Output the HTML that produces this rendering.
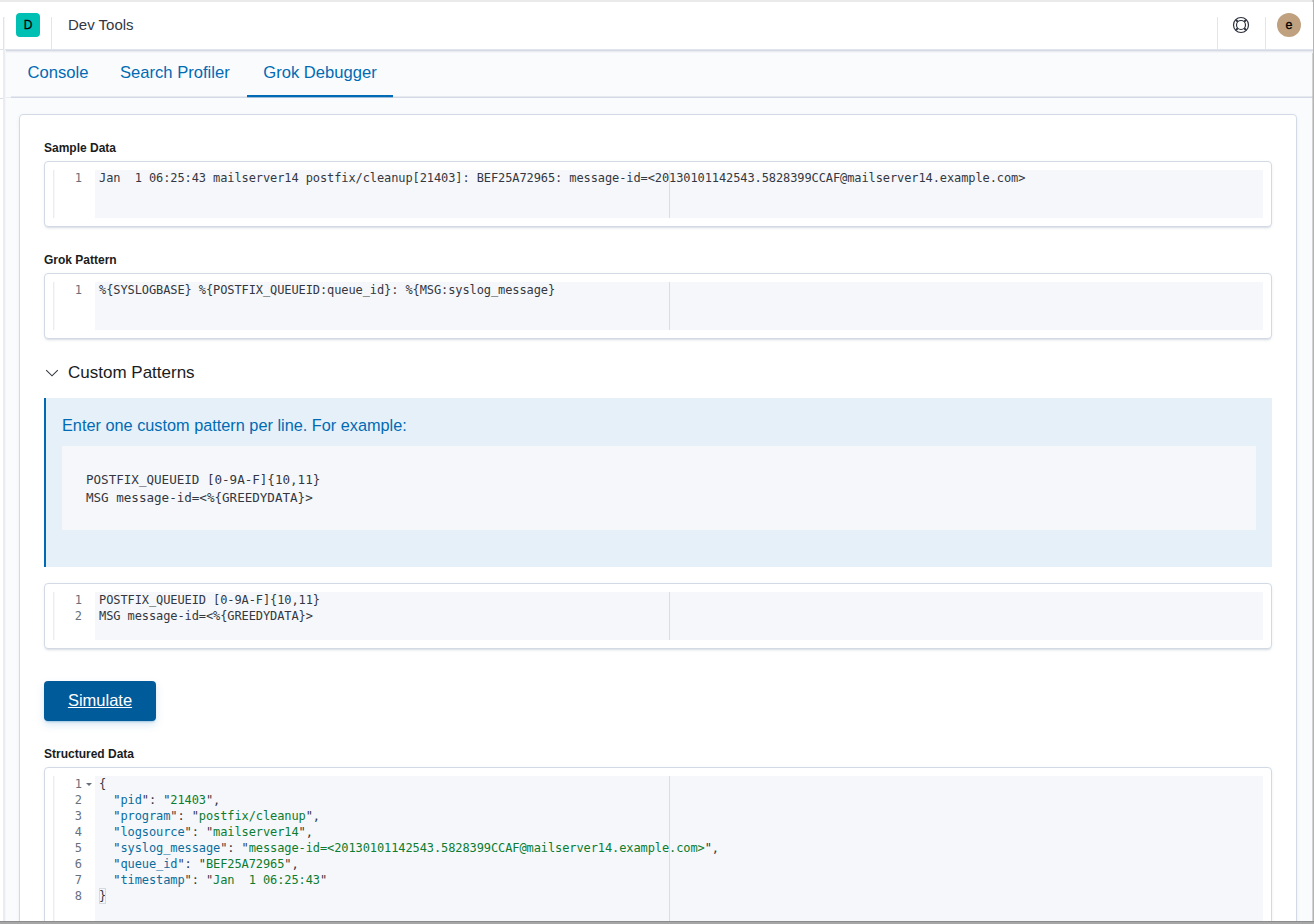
<!DOCTYPE html>
<html lang="en">
<head>
<meta charset="utf-8">
<title>Dev Tools - Grok Debugger</title>
<style>
*{box-sizing:border-box;margin:0;padding:0}
html,body{width:1314px;height:924px;overflow:hidden;background:#fff}
body{position:relative;font-family:"Liberation Sans",sans-serif;color:#343741;-webkit-font-smoothing:antialiased}
.abs{position:absolute}
#topstrip{left:0;top:0;width:1314px;height:2px;background:#eaeaea}
#rightedge{left:1312px;top:0;width:2px;height:924px;background:linear-gradient(90deg,rgba(190,190,190,.35),#b4b4b4 60%)}
#bottombar{left:0;top:921px;width:1314px;height:3px;background:#a6a6a6;border-top:1px solid #8c8c8c}
#leftline{left:3px;top:17px;width:2px;height:33px;background:linear-gradient(90deg,#dfe3ec 0,#dfe3ec 1px,#f3f5f9 1px);z-index:3}
#leftshade{left:3px;top:50px;width:3px;height:871px;background:linear-gradient(90deg,#eaecf1 0,#eaecf1 2px,#f5f6f9 2px);z-index:3}
#lefthr1{left:0;top:49px;width:4px;height:1px;background:#dfe3ec;z-index:3}
#lefthr2{left:0;top:98px;width:4px;height:1px;background:#d9dde6}
#lefthr3{left:4px;top:97px;width:7px;height:1px;background:#e9ecf2}

/* header */
#header{left:4px;top:2px;width:1309px;height:48px;background:#fff;border-bottom:1px solid #dfe3ec;z-index:2}
#hshadow{left:4px;top:50px;width:1309px;height:3px;z-index:2;background:linear-gradient(180deg,#d5dae5 0,#d5dae5 1px,#e9ebf1 1px,#e9ebf1 2px,#f4f5f9 2px,#f4f5f9 3px)}
#appbadge{left:12px;top:11px;width:24px;height:24px;border-radius:4px;background:#00bfb3;color:#000;font-size:12px;font-weight:400;-webkit-text-stroke:.3px #000;text-align:center;line-height:24px}
.hsep{top:15px;width:1px;height:33px;background:#e1e5ee}
#crumb{left:64px;top:13px;font-size:15px;line-height:20px;color:#343741;white-space:nowrap}
#help{left:1229px;top:15px;width:16px;height:16px;overflow:visible}
#avatar{left:1273px;top:11px;width:24px;height:24px;border-radius:50%;background:#bfa180;color:#000;font-size:12.4px;text-align:center;line-height:24px;-webkit-text-stroke:.35px #000}

/* main */
#main{left:4px;top:50px;width:1309px;height:871px;background:#fafbfd}
#tabs{left:7px;top:0;width:1302px;height:48px;border-bottom:1px solid #d4dae5}
#tabs:before{content:"";position:absolute;left:0;right:0;bottom:0;height:1px;background:#e6e9f0}
.tab{position:absolute;top:0;height:48px;line-height:46px;font-size:16.6px;color:#006bb4;white-space:nowrap}
.tab.sel:after{content:"";position:absolute;left:0;right:0;top:45px;height:2px;background:#006bb4;box-shadow:0 1px 0 rgba(0,107,180,.25)}

#panel{left:15px;top:64px;width:1278px;height:900px;background:#fff;border:1px solid #d3dae6;border-radius:4px;box-shadow:0 2px 2px -1px rgba(152,162,179,.3),0 1px 5px -2px rgba(152,162,179,.3)}
.lbl{position:absolute;left:24px;font-size:12px;font-weight:700;color:#1a1c21;line-height:16px;white-space:nowrap}
.ed{position:absolute;left:24px;width:1228px;background:#fff;border:1px solid #d3dae6;border-radius:4px;box-shadow:0 2px 2px -1px rgba(152,162,179,.3),0 1px 5px -2px rgba(152,162,179,.3)}
.ed .gl{position:absolute;left:8px;top:8px;bottom:8px;width:2px;background:linear-gradient(90deg,#e9ecf2 0,#e9ecf2 1px,#f6f7fa 1px)}
.ed .bg{position:absolute;left:50px;top:8px;right:8px;bottom:8px;background:#f5f7fa}
.ed .pm{position:absolute;left:624px;top:8px;bottom:8px;width:1px;background:#d8dde8}
.ed .ln{position:absolute;left:9px;width:28px;text-align:right;color:#69707d}
.ed .ln,.ed .cl{font-family:"DejaVu Sans Mono","Liberation Mono",monospace;font-size:12px;letter-spacing:-0.099px;line-height:16px;height:16px;white-space:pre}
.ed .cl{position:absolute;left:54px;color:#343741}
.ed .s{color:#0c7c30}
.ed .k{color:#0b6d9e}

#acc{left:24px;top:242px;width:1228px;height:32px}
#chev{left:0;top:8px;width:16px;height:16px}
#acctitle{left:24px;top:4px;font-size:17px;line-height:24px;color:#1a1c21;white-space:nowrap}
#callout{left:24px;top:283px;width:1228px;height:169px;background:#e6f0f8;border-left:2px solid #006bb4}
#cotitle{left:16px;top:15px;font-size:16.3px;line-height:24px;color:#006bb4;white-space:nowrap}
#cocode{left:16px;top:48px;width:1194px;height:84px;background:#f5f7fa;padding:25px 24px 23px;font-family:"DejaVu Sans Mono","Liberation Mono",monospace;letter-spacing:-0.025px;font-size:12.6px;line-height:18px;color:#343741;white-space:pre}
#btn{left:24px;top:566px;width:112px;height:40px;border-radius:4px;background:#005b9b;color:#fff;font-size:16.5px;line-height:38px;text-align:center;box-shadow:0 4px 8px 0 rgba(0,107,180,.15),0 2px 2px -1px rgba(0,107,180,.3)}
#btn span{text-decoration:underline}
.fold{left:41px;width:0;height:0;border-left:3px solid transparent;border-right:3px solid transparent;border-top:3px solid #69707d}
.brk{left:54px;width:7px;height:16px;border:1px solid #d5d9e0}
</style>
</head>
<body>
<div id="topstrip" class="abs"></div>
<div id="header" class="abs">
  <div id="appbadge" class="abs">D</div>
  <div class="hsep abs" style="left:47px"></div>
  <div id="crumb" class="abs">Dev Tools</div>
  <div class="hsep abs" style="left:1213px"></div>
  <svg id="help" class="abs" viewBox="0 0 16 16" fill="none" stroke="#2d313c" stroke-width="1.2"><circle cx="8" cy="8" r="7.5"/><circle cx="8" cy="8" r="4.5"/><path d="M2.9 2.9l1.9 1.9M13.1 2.9l-1.9 1.9M2.9 13.1l1.9-1.9M13.1 13.1l-1.9-1.9" stroke-width="2"/></svg>
  <div class="hsep abs" style="left:1261px"></div>
  <div id="avatar" class="abs">e</div>
</div>
<div id="hshadow" class="abs"></div>
<div id="main" class="abs">
  <div id="tabs" class="abs">
    <div class="tab" style="left:16.5px">Console</div>
    <div class="tab" style="left:109px">Search Profiler</div>
    <div class="tab sel" style="left:236px;width:146px;text-align:center">Grok Debugger</div>
  </div>
  <div id="panel" class="abs">
    <div class="lbl" style="top:25px">Sample Data</div>
    <div class="ed" style="top:46px;height:66px">
      <div class="gl"></div><div class="bg"></div><div class="pm"></div>
      <div class="ln" style="top:8px">1</div>
      <div class="cl" style="top:8px">Jan  1 06:25:43 mailserver14 postfix/cleanup[21403]: BEF25A72965: message-id=&lt;20130101142543.5828399CCAF@mailserver14.example.com&gt;</div>
    </div>
    <div class="lbl" style="top:137px">Grok Pattern</div>
    <div class="ed" style="top:158px;height:66px">
      <div class="gl"></div><div class="bg"></div><div class="pm"></div>
      <div class="ln" style="top:8px">1</div>
      <div class="cl" style="top:8px">%{SYSLOGBASE} %{POSTFIX_QUEUEID:queue_id}: %{MSG:syslog_message}</div>
    </div>
    <div id="acc" class="abs">
      <svg class="abs" id="chev" viewBox="0 0 16 16"><path d="M2.2 5.2L8 10.8L13.8 5.2" fill="none" stroke="#343741" stroke-width="1.1"/></svg>
      <span id="acctitle" class="abs">Custom Patterns</span>
    </div>
    <div id="callout" class="abs">
      <div id="cotitle" class="abs">Enter one custom pattern per line. For example:</div>
      <pre id="cocode" class="abs">POSTFIX_QUEUEID [0-9A-F]{10,11}
MSG message-id=&lt;%{GREEDYDATA}&gt;</pre>
    </div>
    <div class="ed" style="top:468px;height:66px">
      <div class="gl"></div><div class="bg"></div><div class="pm"></div>
      <div class="ln" style="top:8px">1</div>
      <div class="cl" style="top:8px">POSTFIX_QUEUEID [0-9A-F]{10,11}</div>
      <div class="ln" style="top:24px">2</div>
      <div class="cl" style="top:24px">MSG message-id=&lt;%{GREEDYDATA}&gt;</div>
    </div>
    <div id="btn" class="abs"><span>Simulate</span></div>
    <div class="lbl" style="top:631px">Structured Data</div>
    <div class="ed" style="top:652px;height:200px">
      <div class="gl"></div><div class="bg"></div><div class="pm"></div>
      <div class="ln" style="top:8px">1</div><div class="fold abs" style="top:15px"></div>
      <div class="cl" style="top:8px">{</div>
      <div class="ln" style="top:24px">2</div>
      <div class="cl" style="top:24px">  "<span class="k">pid</span>": "<span class="s">21403</span>",</div>
      <div class="ln" style="top:40px">3</div>
      <div class="cl" style="top:40px">  "<span class="k">program</span>": "<span class="s">postfix/cleanup</span>",</div>
      <div class="ln" style="top:56px">4</div>
      <div class="cl" style="top:56px">  "<span class="k">logsource</span>": "<span class="s">mailserver14</span>",</div>
      <div class="ln" style="top:72px">5</div>
      <div class="cl" style="top:72px">  "<span class="k">syslog_message</span>": "<span class="s">message-id=&lt;20130101142543.5828399CCAF@mailserver14.example.com&gt;</span>",</div>
      <div class="ln" style="top:88px">6</div>
      <div class="cl" style="top:88px">  "<span class="k">queue_id</span>": "<span class="s">BEF25A72965</span>",</div>
      <div class="ln" style="top:104px">7</div>
      <div class="cl" style="top:104px">  "<span class="k">timestamp</span>": "<span class="s">Jan  1 06:25:43</span>"</div>
      <div class="ln" style="top:120px">8</div>
      <div class="cl" style="top:120px">}</div><div class="brk abs" style="top:120px"></div>
    </div>
  </div>
</div>
<div id="leftline" class="abs"></div>
<div id="leftshade" class="abs"></div>
<div id="lefthr1" class="abs"></div>
<div id="lefthr2" class="abs"></div>
<div id="lefthr3" class="abs"></div>
<div id="rightedge" class="abs"></div>
<div id="bottombar" class="abs"></div>
</body>
</html>
